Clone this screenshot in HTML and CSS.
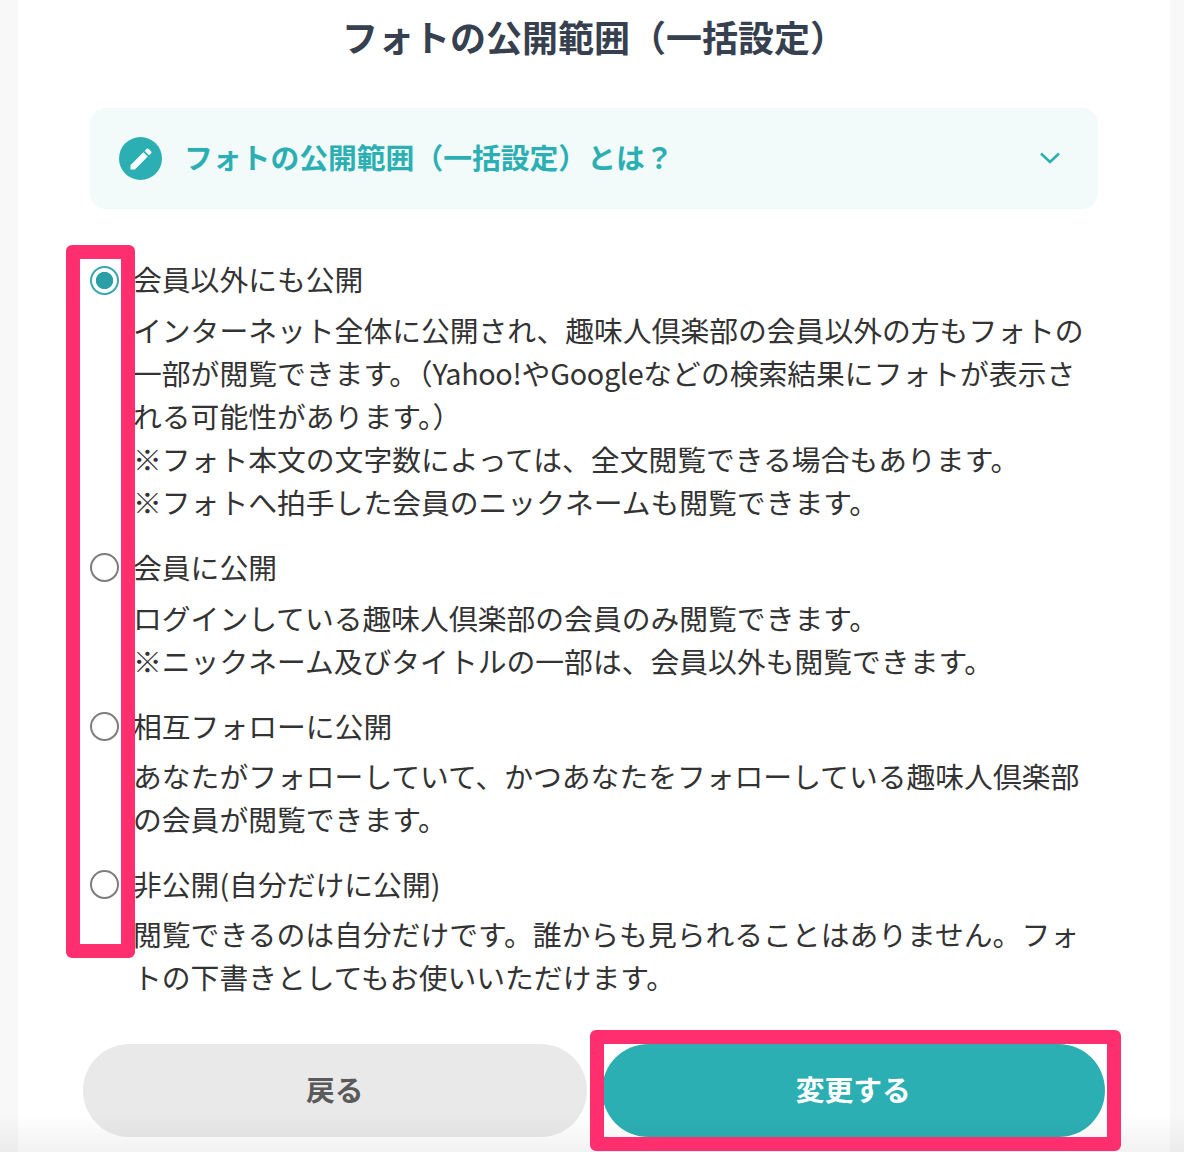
FILE: index.html
```html
<!DOCTYPE html>
<html lang="ja">
<head>
    <meta charset="UTF-8">
    <title>フォトの公開範囲（一括設定）</title>
    <link rel="stylesheet" href="styles.css">
</head>
<body>
    <div class="panel">
        <h2 class="title">フォトの公開範囲（一括設定）</h2>

        <div class="info">
            <span class="info-icon">
                <svg viewBox="0 0 24 24" width="28" height="28"><path fill="#fff" d="M3 17.25V21h3.75L17.81 9.94l-3.75-3.75L3 17.25zM20.71 7.04a1 1 0 0 0 0-1.41l-2.34-2.34a1 1 0 0 0-1.41 0l-1.83 1.83 3.75 3.75 1.83-1.83z"/></svg>
            </span>
            <span class="info-text">フォトの公開範囲（一括設定）とは？</span>
            <svg class="info-arrow" viewBox="0 0 20 12" width="20" height="12"><path fill="none" stroke="#2cafb3" stroke-width="2.6" d="M1 1.5l9 8.5 9-8.5"/></svg>
        </div>

        <form class="options">
            <label class="option">
                <input type="radio" name="scope" checked>
                <span class="option-body">
                    <span class="option-name">会員以外にも公開</span>
                    <span class="option-desc">インターネット全体に公開され、趣味人倶楽部の会員以外の方もフォトの<br>一部が閲覧できます。（<span class="latin">Yahoo!</span>や<span class="latin">Google</span>などの検索結果にフォトが表示さ<br>れる可能性があります。）<br>※フォト本文の文字数によっては、全文閲覧できる場合もあります。<br>※フォトへ拍手した会員のニックネームも閲覧できます。</span>
                </span>
            </label>
            <label class="option">
                <input type="radio" name="scope">
                <span class="option-body">
                    <span class="option-name">会員に公開</span>
                    <span class="option-desc">ログインしている趣味人倶楽部の会員のみ閲覧できます。<br>※ニックネーム及びタイトルの一部は、会員以外も閲覧できます。</span>
                </span>
            </label>
            <label class="option">
                <input type="radio" name="scope">
                <span class="option-body">
                    <span class="option-name">相互フォローに公開</span>
                    <span class="option-desc">あなたがフォローしていて、かつあなたをフォローしている趣味人倶楽部の会員が閲覧できます。</span>
                </span>
            </label>
            <label class="option">
                <input type="radio" name="scope">
                <span class="option-body">
                    <span class="option-name">非公開(自分だけに公開)</span>
                    <span class="option-desc">閲覧できるのは自分だけです。誰からも見られることはありません。フォトの下書きとしてもお使いいただけます。</span>
                </span>
            </label>
        </form>

        <div class="buttons">
            <button type="button" class="btn btn-back">戻る</button>
            <button type="button" class="btn btn-submit">変更する</button>
        </div>
    </div>

    <!-- annotations drawn over the page -->
    <div class="fade"></div>
    <div class="mark mark-radios"></div>
    <div class="mark mark-submit"></div>
</body>
</html>
```

FILE: styles.css
```css
html, body {
    margin: 0;
    height: 1152px;
    overflow: hidden;
}
body {
    position: relative;
    background-color: #f8f8f8;
    font-family: "Noto Sans CJK JP", "Noto Sans", sans-serif;
    color: #333;
}
.panel {
    box-sizing: border-box;
    width: 1152px;
    height: 1152px;
    margin-left: 18px;
    padding: 11px 65px 0 65px;
    background-color: #fff;
}
.title {
    margin: 0 0 47px;
    font-size: 36px;
    line-height: 50px;
    font-weight: 700;
    color: #36404f;
    text-align: center;
}
.info {
    display: flex;
    align-items: center;
    height: 101px;
    margin: 0 7px;
    padding: 0 38px 0 29px;
    background-color: #f2fbfa;
    border-radius: 16px;
}
.info-icon {
    display: flex;
    align-items: center;
    justify-content: center;
    width: 43px;
    height: 43px;
    margin-right: 23px;
    background-color: #2cafb3;
    border-radius: 50%;
}
.info-text {
    flex: 1;
    margin-left: -1px;
    padding-bottom: 4px;
    font-size: 28.8px;
    font-weight: 700;
    color: #2cafb3;
}
.info-arrow {
    margin-bottom: 2px;
}
.options {
    margin-top: 49px;
    padding: 0 10px 0 6px;
}
.option {
    display: flex;
    margin-bottom: 22.3px;
}
.option input {
    appearance: none;
    box-sizing: border-box;
    flex: none;
    width: 29px;
    height: 29px;
    margin: 7.5px 0 0 1px;
    background-color: #fff;
    border: 2px solid #7d7d7d;
    border-radius: 50%;
}
.option input:checked {
    border-color: #3aa7ac;
    background: radial-gradient(circle, #2a9fa5 0, #2a9fa5 8.3px, #fff 9px);
}
.option-body {
    display: block;
    flex: 1;
    margin: -0.6px 0 0 14px;
    font-size: 28.8px;
    line-height: 43.2px;
}
.option-name {
    display: block;
    margin-bottom: 7px;
}
.option-desc {
    display: block;
}
.latin {
    letter-spacing: -0.35px;
}
.buttons {
    display: flex;
    gap: 15px;
    margin-top: 45px;
}
.btn {
    width: 504px;
    height: 93px;
    padding: 0 0 3px;
    border: none;
    border-radius: 47px;
    font-family: inherit;
    font-size: 28.8px;
    font-weight: 700;
}
.btn-back {
    background-color: #e9e9e9;
    color: #5a5a5a;
}
.btn-submit {
    background-color: #2cafb3;
    color: #fff;
}
.fade {
    position: absolute;
    left: 0;
    right: 0;
    bottom: 0;
    height: 40px;
    background: linear-gradient(rgba(0, 0, 0, 0), rgba(0, 0, 0, 0.05));
}
.mark {
    position: absolute;
    box-sizing: border-box;
    border: 14px solid #ff2e6e;
    border-radius: 6px;
}
.mark-radios {
    left: 66px;
    top: 245px;
    width: 69px;
    height: 713px;
}
.mark-submit {
    left: 590px;
    top: 1030px;
    width: 531px;
    height: 121px;
}
```
